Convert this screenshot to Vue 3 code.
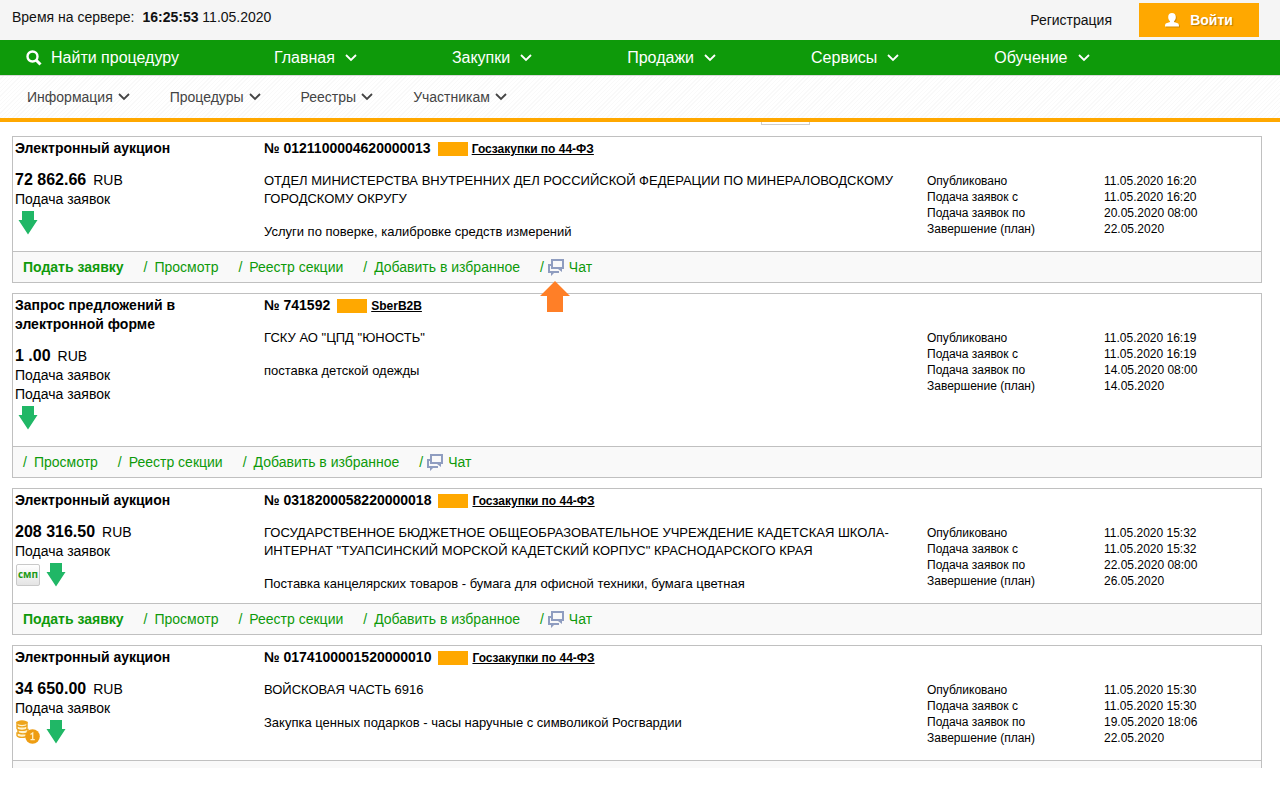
<script setup>
const mainMenu = ['Главная', 'Закупки', 'Продажи', 'Сервисы', 'Обучение']
const subMenu = ['Информация', 'Процедуры', 'Реестры', 'Участникам']

const dates = (a, b, c, d) => [
  ['Опубликовано', a],
  ['Подача заявок с', b],
  ['Подача заявок по', c],
  ['Завершение (план)', d],
]

const lots = [
  {
    type: 'Электронный аукцион',
    price: '72 862.66',
    statuses: ['Подача заявок'],
    number: '0121100004620000013',
    section: 'Госзакупки по 44-ФЗ',
    customer: 'ОТДЕЛ МИНИСТЕРСТВА ВНУТРЕННИХ ДЕЛ РОССИЙСКОЙ ФЕДЕРАЦИИ ПО МИНЕРАЛОВОДСКОМУ ГОРОДСКОМУ ОКРУГУ',
    subject: 'Услуги по поверке, калибровке средств измерений',
    dates: dates('11.05.2020 16:20', '11.05.2020 16:20', '20.05.2020 08:00', '22.05.2020'),
    apply: true,
    pointer: true,
  },
  {
    type: 'Запрос предложений в электронной форме',
    price: '1 .00',
    statuses: ['Подача заявок', 'Подача заявок'],
    number: '741592',
    section: 'SberB2B',
    customer: 'ГСКУ АО "ЦПД "ЮНОСТЬ"',
    subject: 'поставка детской одежды',
    dates: dates('11.05.2020 16:19', '11.05.2020 16:19', '14.05.2020 08:00', '14.05.2020'),
  },
  {
    type: 'Электронный аукцион',
    price: '208 316.50',
    statuses: ['Подача заявок'],
    smp: true,
    number: '0318200058220000018',
    section: 'Госзакупки по 44-ФЗ',
    customer: 'ГОСУДАРСТВЕННОЕ БЮДЖЕТНОЕ ОБЩЕОБРАЗОВАТЕЛЬНОЕ УЧРЕЖДЕНИЕ КАДЕТСКАЯ ШКОЛА-ИНТЕРНАТ "ТУАПСИНСКИЙ МОРСКОЙ КАДЕТСКИЙ КОРПУС" КРАСНОДАРСКОГО КРАЯ',
    subject: 'Поставка канцелярских товаров - бумага для офисной техники, бумага цветная',
    dates: dates('11.05.2020 15:32', '11.05.2020 15:32', '22.05.2020 08:00', '26.05.2020'),
    apply: true,
  },
  {
    type: 'Электронный аукцион',
    price: '34 650.00',
    statuses: ['Подача заявок'],
    coins: true,
    number: '0174100001520000010',
    section: 'Госзакупки по 44-ФЗ',
    customer: 'ВОЙСКОВАЯ ЧАСТЬ 6916',
    subject: 'Закупка ценных подарков - часы наручные с символикой Росгвардии',
    dates: dates('11.05.2020 15:30', '11.05.2020 15:30', '19.05.2020 18:06', '22.05.2020'),
    folded: true,
  },
]
const links = ['Просмотр', 'Реестр секции', 'Добавить в избранное']
</script>

<template>
  <div class="page">
    <header class="top">
      <p class="clock">Время на сервере: <b>16:25:53</b> 11.05.2020</p>
      <div class="account">
        <a class="register" href="#">Регистрация</a>
        <button class="login" type="button">
          <svg class="user" width="14" height="14" viewBox="0 0 14 14" aria-hidden="true">
            <path d="M7 0C9.400 0 10.800 1.500 10.800 4C10.800 6 10 7.500 9 8.200V9L12.600 10.300C13.500 10.700 14 11.300 14 13.500H0C0 11.300 .5 10.700 1.400 10.300L5 9V8.200C4 7.500 3.200 6 3.200 4C3.200 1.500 4.600 0 7 0Z" fill="#fff" />
          </svg>
          Войти
        </button>
      </div>
    </header>

    <nav class="main-nav">
      <a class="find" href="#">
        <svg width="16" height="16" viewBox="0 0 16 16" fill="none" stroke="#fff" aria-hidden="true">
          <circle cx="6.500" cy="6.500" r="5" stroke-width="2.400" />
          <path d="M10 10L14.500 14.500" stroke-width="3" />
        </svg>
        Найти процедуру
      </a>
      <a v-for="m in mainMenu" :key="m" class="main-item" href="#">
        {{ m }}
        <svg width="12" height="8" viewBox="0 0 12 8" fill="none" stroke="#fff" stroke-width="1.800" aria-hidden="true"><path d="M1 1L6 6L11 1" /></svg>
      </a>
    </nav>

    <nav class="sub-nav">
      <a v-for="m in subMenu" :key="m" class="sub-item" href="#">
        {{ m }}
        <svg width="12" height="8" viewBox="0 0 12 8" fill="none" stroke="#444" stroke-width="1.800" aria-hidden="true"><path d="M1 1L6 6L11 1" /></svg>
      </a>
    </nav>

    <main class="list">
      <span class="tab"></span>
      <article v-for="lot in lots" :key="lot.number" class="card" :class="{ folded: lot.folded }">
        <div class="body">
          <div class="summary">
            <h2 class="type">{{ lot.type }}</h2>
            <p class="price"><b>{{ lot.price }}</b>RUB</p>
            <p v-for="(s, i) in lot.statuses" :key="i">{{ s }}</p>
            <div class="marks">
              <span v-if="lot.smp" class="smp">смп</span>
              <svg v-if="lot.coins" width="24" height="24" viewBox="0 0 24 24" aria-hidden="true">
                <g fill="#fff3cf" stroke="#eda41c" stroke-width="1.400">
                  <path d="M1 15.500C2 18 10 18 11 15.500V13H1Z" />
                  <path d="M2 12C3 14.500 11 14.500 12 12V9.500H2Z" />
                  <path d="M1 8.500C2 11 10 11 11 8.500V6H1Z" />
                  <path d="M1 5C2 7.500 10 7.500 11 5V2.500H1Z" />
                </g>
                <ellipse cx="6" cy="2.600" rx="5.500" ry="2.300" fill="#eda41c" />
                <circle cx="16.500" cy="16.500" r="7.300" fill="#ee9d12" />
                <path d="M14.500 14.500L16.700 13V19.500M14.500 19.600H18.800" fill="none" stroke="#fff0c4" stroke-width="1.300" />
              </svg>
              <svg width="20" height="24" viewBox="0 0 20 24" aria-hidden="true"><path d="M4 0H16V9H19.500L10 23.500L.5 9H4Z" fill="#20b766" /></svg>
            </div>
          </div>

          <div class="details">
            <div class="number">
              <b>№ {{ lot.number }}</b>
              <span class="flag"></span>
              <a href="#">{{ lot.section }}</a>
            </div>
            <p class="customer">{{ lot.customer }}</p>
            <p class="subject">{{ lot.subject }}</p>
          </div>

          <dl class="dates">
            <div v-for="d in lot.dates" :key="d[0]" class="date">
              <dt>{{ d[0] }}</dt>
              <dd>{{ d[1] }}</dd>
            </div>
          </dl>
        </div>

        <footer class="actions">
          <template v-if="!lot.folded">
            <a v-if="lot.apply" class="apply" href="#">Подать заявку</a>
            <span v-for="l in links" :key="l" class="action">/<a href="#">{{ l }}</a></span>
            <span class="action chat">/<a href="#">
              <svg width="17" height="17" viewBox="0 0 17 17" aria-hidden="true">
                <path d="M0 5H4V12H11V14H6L3 17V14H0Z" fill="#8f9dc0" />
                <path d="M2 7H4V12H2Z" fill="#f9f9f9" />
                <path d="M3 0H16V10H14V13L10 10H3Z" fill="#8f9dc0" />
                <path d="M5 2H14V8H5Z" fill="#f9f9f9" />
              </svg>
              Чат</a>
              <svg v-if="lot.pointer" class="pointer" width="30" height="31" viewBox="0 0 30 31" aria-hidden="true"><path d="M15 0L30 15H23V31H7V15H0Z" fill="#ff7f27" /></svg>
            </span>
          </template>
        </footer>
      </article>
    </main>
  </div>
</template>

<style>
body {
  margin: 0;
  background: #fff;
}
</style>

<style scoped>
.page {
  font-family: "Liberation Sans", Arial, sans-serif;
  font-size: 14px;
  line-height: 19px;
  color: #000;
}
p, h2, dl, dd {
  margin: 0;
}
a {
  color: inherit;
  text-decoration: none;
}
.top {
  display: flex;
  justify-content: space-between;
  height: 40px;
  padding: 0 21px 0 12px;
  background: #f5f5f5;
  color: #111;
}
.clock {
  padding-top: 8px;
}
.clock b {
  margin-left: 4px;
}
.account {
  display: flex;
  align-items: center;
  gap: 27px;
}
.login {
  display: flex;
  align-items: center;
  justify-content: center;
  gap: 11px;
  width: 120px;
  height: 34px;
  padding: 0;
  border: 0;
  background: #ffa800;
  color: #fff;
  font: bold 14px "Liberation Sans", Arial, sans-serif;
  text-shadow: 1px 1px 1px #b87900;
}
.user {
  filter: drop-shadow(1px 1px 0 #d28b00);
}
.main-nav {
  display: flex;
  align-items: center;
  gap: 95px;
  height: 35px;
  padding-left: 26px;
  background: #0e9a0a;
  color: #fff;
  font-size: 16px;
}
.main-item, .sub-item, .find {
  display: flex;
  align-items: center;
  gap: 9px;
  white-space: nowrap;
}
.main-item {
  gap: 10px;
}
.sub-nav {
  display: flex;
  align-items: center;
  gap: 40px;
  height: 42px;
  padding-left: 27px;
  border-top: 1px solid #d9d9d9;
  border-bottom: 4px solid #ffa800;
  background: repeating-linear-gradient(135deg, #fff 0 2px, #f9f9f9 2px 3px);
  color: #444;
}
.sub-item {
  gap: 5px;
}
.list {
  position: relative;
  display: flex;
  flex-direction: column;
  gap: 10px;
  padding: 14px 18px 32px 12px;
}
.tab {
  position: absolute;
  top: 0;
  left: 761px;
  width: 47px;
  height: 2px;
  border: 1px solid #ccc;
  border-top: 0;
}
.card {
  border: 1px solid #c0c0c0;
}
.folded {
  border-bottom: 0;
}
.body {
  display: grid;
  grid-template-columns: 249px 1fr 334px;
  padding: 2px 0 10px 2px;
}
.summary {
  padding: 0 60px 6px 0;
}
.type {
  margin-bottom: 13px;
  font-size: 14px;
  line-height: 19px;
}
.price b {
  margin-right: 7px;
  font-size: 16px;
  line-height: 16px;
}
.marks {
  display: flex;
  gap: 4px;
  height: 24px;
  margin-top: 2px;
  padding-left: 1px;
}
.marks > :last-child {
  margin-left: 2px;
}
.smp {
  box-sizing: border-box;
  width: 24px;
  height: 22px;
  margin-top: 1px;
  border: 1px solid #c9c9c9;
  border-radius: 2px;
  background: linear-gradient(#fff, #e4e4e4);
  color: #1d9a17;
  font: bold 10px/18px "Open Sans", sans-serif;
  text-align: center;
}
.number {
  display: flex;
  align-items: baseline;
  height: 19px;
  line-height: 19px;
}
.number a {
  font-size: 12px;
  font-weight: bold;
  text-decoration: underline;
}
.flag {
  align-self: center;
  width: 30px;
  height: 14px;
  margin: 0 4px 0 7px;
  background: #ffa800;
}
.customer {
  margin-top: 14px;
  padding-right: 20px;
  font-size: 13px;
  line-height: 18px;
}
.subject {
  margin-top: 15px;
  font-size: 13px;
  line-height: 18px;
}
.dates {
  padding-top: 34px;
  font-size: 12px;
  line-height: 16px;
}
.date {
  display: grid;
  grid-template-columns: 177px 1fr;
}
.actions {
  display: flex;
  align-items: center;
  gap: 20px;
  min-height: 30px;
  padding-left: 10px;
  border-top: 1px solid #c0c0c0;
  background: #f9f9f9;
  color: #0e9a0a;
}
.folded .actions {
  min-height: 7px;
}
.apply {
  font-weight: bold;
}
.action {
  display: flex;
  gap: 7px;
}
.chat {
  position: relative;
  gap: 4px;
}
.chat a {
  display: flex;
  align-items: center;
  gap: 4px;
}
.pointer {
  position: absolute;
  top: 23px;
  left: 0;
  z-index: 1;
}
</style>
